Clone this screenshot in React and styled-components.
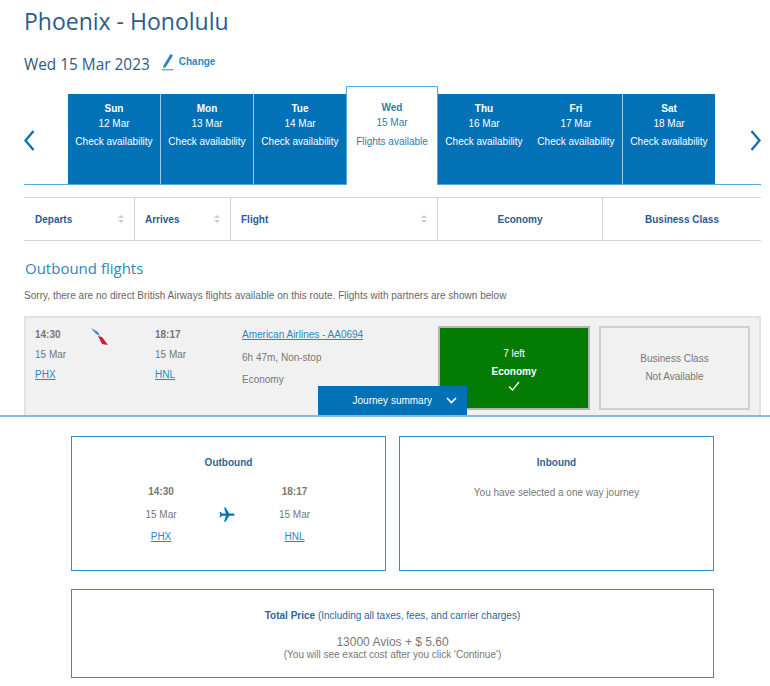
import React from "react";
import styled, { createGlobalStyle } from "styled-components";

const GlobalStyle = createGlobalStyle`
  html, body {
    margin: 0;
    padding: 0;
    background: #fff;
    font-family: "Liberation Sans", Arial, sans-serif;
  }
  a { color: #2b87c0; }
`;

const Page = styled.div`
  position: relative;
  width: 770px;
  height: 686px;
  overflow: hidden;
`;
const Results = styled.div`
  height: 415px;
  padding: 0 9px 0 24px;
  overflow: hidden;
`;
const Title = styled.h1`
  margin: 0;
  padding-top: 5px;
  font-family: "Open Sans", sans-serif;
  font-size: 23px;
  line-height: 33px;
  font-weight: 400;
  color: #2a5c8f;
`;
const DateRow = styled.div`
  display: flex;
  align-items: center;
  height: 28px;
  margin-top: 12px;
`;
const DateText = styled.span`
  font-family: "Open Sans", sans-serif;
  font-size: 15.4px;
  color: #2f5a85;
`;
const ChangeLink = styled.span`
  display: flex;
  align-items: center;
  gap: 5px;
  margin-left: 12px;
  margin-top: -5px;
  font-size: 10px;
  font-weight: 700;
  color: #2b87c0;
`;
const DayStrip = styled.div`
  display: flex;
  align-items: flex-end;
  height: 100px;
  margin-top: 6px;
  border-bottom: 1px solid #4ea9e0;
`;
const Arrow = styled.div`
  align-self: center;
  width: 44px;
  display: flex;
  justify-content: ${p => (p.$right ? "flex-end" : "flex-start")};
  margin-top: 12px;
  margin-left: ${p => (p.$right ? "auto" : "0")};
`;
const DayTab = styled.div`
  box-sizing: border-box;
  width: ${p => p.$w}px;
  height: ${p => (p.$active ? 99 : 90)}px;
  padding-top: ${p => (p.$active ? 13 : 7)}px;
  margin-bottom: ${p => (p.$active ? -1 : 0)}px;
  text-align: center;
  font-size: 10px;
  line-height: 15px;
  background: ${p => (p.$active ? "#fff" : "#0271b5")};
  color: ${p => (p.$active ? "#2b7db5" : "#fff")};
  border-right: ${p => (p.$sep ? "1px solid #9cc9e6" : "none")};
  ${p => p.$active && "border: 1px solid #4ea9e0; border-bottom: none;"}
`;
const DayName = styled.div`
  font-weight: 700;
`;
const DayStatus = styled.div`
  margin-top: ${p => (p.$active ? 4 : 3)}px;
`;
const SortHeader = styled.div`
  display: grid;
  grid-template-columns: 110px 96px 207px 165px 1fr;
  height: 42px;
  margin-top: 12px;
  border-top: 1px solid #d4d4d4;
  border-bottom: 1px solid #d4d4d4;
`;
const HeadCell = styled.div`
  display: flex;
  align-items: center;
  justify-content: ${p => (p.$center ? "center" : "space-between")};
  padding: 0 ${p => (p.$center ? 0 : 10)}px 0 ${p => (p.$center ? 0 : p.$first ? 11 : 10)}px;
  font-size: 10px;
  font-weight: 700;
  color: #2b5a93;
  border-left: ${p => (p.$first ? "none" : "1px solid #d4d4d4")};
`;
const Sort = styled.span`
  display: flex;
  flex-direction: column;
  gap: 2px;
  &::before, &::after {
    content: "";
    width: 0;
    height: 0;
    border-left: 3px solid transparent;
    border-right: 3px solid transparent;
  }
  &::before { border-bottom: 3px solid #ccc; }
  &::after { border-top: 3px solid #ccc; }
`;
const SectionTitle = styled.h2`
  margin: 16px 0 0 1px;
  font-family: "Open Sans", sans-serif;
  font-size: 15px;
  line-height: 22px;
  font-weight: 400;
  color: #2b87c0;
`;
const Notice = styled.p`
  margin: 10px 0 0;
  font-size: 10px;
  line-height: 14px;
  letter-spacing: 0.026px;
  color: #666;
`;
const FlightCard = styled.div`
  display: grid;
  grid-template-columns: 120px 87px 196px 150px 1fr;
  box-sizing: border-box;
  height: 120px;
  margin-top: 13px;
  padding: 8px 9px 0;
  background: #f1f1f1;
  border: 2px solid #e2e2e2;
`;
const InfoCol = styled.div`
  position: relative;
  font-size: 10px;
  line-height: 20px;
  color: #777;
`;
const Time = styled.div`
  font-weight: ${p => (p.$plain ? 400 : 700)};
  margin-top: -1px;
`;
const Line = styled.div`
  margin-top: ${p => p.$gap || 0}px;
`;
const Logo = styled.svg`
  position: absolute;
  left: 56px;
  top: 2px;
`;
const FareBox = styled.div`
  box-sizing: border-box;
  width: ${p => (p.$selected ? 152 : 151)}px;
  height: 84px;
  display: flex;
  flex-direction: column;
  align-items: center;
  text-align: center;
  font-size: 10px;
  line-height: 18px;
  padding-top: ${p => (p.$selected ? 17 : 22)}px;
  color: ${p => (p.$selected ? "#fff" : "#777")};
  background: ${p => (p.$selected ? "#047c03" : "transparent")};
  border: 2px solid ${p => (p.$selected ? "#b5b5b5" : "#cfcfcf")};
  justify-self: ${p => (p.$selected ? "start" : "end")};
`;
const FareClass = styled.div`
  font-weight: 700;
`;
const JourneyButton = styled.div`
  position: absolute;
  left: 318px;
  top: 386px;
  width: 149px;
  height: 29px;
  display: flex;
  align-items: center;
  justify-content: flex-end;
  gap: 14px;
  padding: 0 10px 0 0;
  box-sizing: border-box;
  background: #0271b5;
  color: #fff;
  font-size: 10px;
`;
const Summary = styled.div`
  height: 271px;
  box-sizing: border-box;
  padding: 19px 56px 0 71px;
  background: #fff;
  border-top: 2px solid #86b8d8;
`;
const CardRow = styled.div`
  display: grid;
  grid-template-columns: 315px 315px;
  gap: 13px;
`;
const SummaryCard = styled.div`
  box-sizing: border-box;
  height: ${p => p.$h}px;
  margin-top: ${p => p.$top || 0}px;
  padding-top: 19px;
  text-align: center;
  font-size: 10px;
  color: #777;
  border: 1px solid #2e8fcc;
`;
const CardTitle = styled.div`
  font-weight: 700;
  line-height: 14px;
  color: #2f659c;
`;
const Plain = styled.div`
  margin-top: 16px;
  line-height: 14px;
`;
const LegRow = styled.div`
  display: grid;
  grid-template-columns: 91px 41px 94px;
  justify-content: center;
  margin-top: 11px;
  align-items: center;
  justify-items: center;
  line-height: 22.5px;
`;
const PriceLabel = styled.div`
  line-height: 14px;
  color: #2f659c;
`;
const Strong = styled.b``;
const Price = styled.div`
  margin-top: 13px;
  font-size: 12px;
  line-height: 13px;
  color: #777;
`;
const PriceNote = styled.div`
  font-size: 10px;
  line-height: 11px;
  color: #777;
`;

const Pencil = () => (
  <svg width="12" height="18" viewBox="0 0 12 18" fill="none">
    <path d="M1.5 12.500 L8.500 1 L11 2.500 L3.800 14 L1.200 15.200 Z" fill="#2b87c0" />
    <path d="M0 16.800 H11.500" stroke="#2b87c0" strokeWidth="1" />
  </svg>
);
const Chevron = ({ right }) => (
  <svg width="11" height="21" viewBox="0 0 11 21" fill="none">
    <path d={right ? "M1.500 1 L9.500 10.500 L1.500 20" : "M9.500 1 L1.500 10.500 L9.500 20"} stroke="#1470ab" strokeWidth="2.400" />
  </svg>
);
const days = [
  ["Sun", "12 Mar", 93, true],
  ["Mon", "13 Mar", 93, true],
  ["Tue", "14 Mar", 92, false],
  ["Wed", "15 Mar", 92, false, true],
  ["Thu", "16 Mar", 92, false],
  ["Fri", "17 Mar", 93, true],
  ["Sat", "18 Mar", 92, false],
];

export default function App() {
  return (
    <Page>
      <GlobalStyle />
      <Results>
        <Title>Phoenix - Honolulu</Title>
        <DateRow>
          <DateText>Wed 15 Mar 2023</DateText>
          <ChangeLink><Pencil />Change</ChangeLink>
        </DateRow>
        <DayStrip>
          <Arrow><Chevron /></Arrow>
          {days.map(([name, date, w, sep, active]) => (
            <DayTab key={name} $w={w} $sep={sep} $active={active}>
              <DayName>{name}</DayName>
              <div>{date}</div>
              <DayStatus $active={active}>{active ? "Flights available" : "Check availability"}</DayStatus>
            </DayTab>
          ))}
          <Arrow $right><Chevron right /></Arrow>
        </DayStrip>
        <SortHeader>
          <HeadCell $first>Departs<Sort /></HeadCell>
          <HeadCell>Arrives<Sort /></HeadCell>
          <HeadCell>Flight<Sort /></HeadCell>
          <HeadCell $center>Economy</HeadCell>
          <HeadCell $center>Business Class</HeadCell>
        </SortHeader>
        <SectionTitle>Outbound flights</SectionTitle>
        <Notice>Sorry, there are no direct British Airways flights available on this route. Flights with partners are shown below</Notice>
        <FlightCard>
          <InfoCol>
            <Time>14:30</Time>
            <Line>15 Mar</Line>
            <Line><a href="#phx">PHX</a></Line>
            <Logo width="17" height="18" viewBox="0 0 17 18">
              <path d="M0 0 L7 4 L9 8 L5 6 Z" fill="#3a8fc4" />
              <path d="M7 8 L11 9 L17 17 L11 16 Z" fill="#c8202f" />
            </Logo>
          </InfoCol>
          <InfoCol>
            <Time>18:17</Time>
            <Line>15 Mar</Line>
            <Line><a href="#hnl">HNL</a></Line>
          </InfoCol>
          <InfoCol>
            <Time $plain><a href="#aa">American Airlines - AA0694</a></Time>
            <Line $gap={3}>6h 47m, Non-stop</Line>
            <Line $gap={2}>Economy</Line>
          </InfoCol>
          <FareBox $selected>
            <div>7 left</div>
            <FareClass>Economy</FareClass>
            <svg width="12" height="10" viewBox="0 0 12 10" fill="none">
              <path d="M1 5.500 L4.500 9 L11 1" stroke="#fff" strokeWidth="1.200" />
            </svg>
          </FareBox>
          <FareBox>
            <div>Business Class</div>
            <div>Not Available</div>
          </FareBox>
        </FlightCard>
      </Results>
      <JourneyButton>
        Journey summary
        <svg width="11" height="7" viewBox="0 0 11 7" fill="none">
          <path d="M1 1 L5.500 5.500 L10 1" stroke="#fff" strokeWidth="1.600" />
        </svg>
      </JourneyButton>
      <Summary>
        <CardRow>
          <SummaryCard $h={135}>
            <CardTitle>Outbound</CardTitle>
            <LegRow>
              <Strong>14:30</Strong><span />
              <Strong>18:17</Strong>
              <span>15 Mar</span>
              <svg width="18" height="18" viewBox="0 0 24 24">
                <path d="M21 16v-2l-8-5V3.500a1.500 1.500 0 0 0-3 0V9l-8 5v2l8-2.500V19l-2 1.500V22l3.500-1 3.500 1v-1.500L13 19v-5.500z" fill="#0271b5" transform="rotate(90 12 12)" />
              </svg>
              <span>15 Mar</span>
              <a href="#phx">PHX</a><span />
              <a href="#hnl">HNL</a>
            </LegRow>
          </SummaryCard>
          <SummaryCard $h={135}>
            <CardTitle>Inbound</CardTitle>
            <Plain>You have selected a one way journey</Plain>
          </SummaryCard>
        </CardRow>
        <SummaryCard $h={89} $top={18}>
          <PriceLabel><Strong>Total Price</Strong> (Including all taxes, fees, and carrier charges)</PriceLabel>
          <Price>13000 Avios + $ 5.60</Price>
          <PriceNote>(You will see exact cost after you click 'Continue')</PriceNote>
        </SummaryCard>
      </Summary>
    </Page>
  );
}
